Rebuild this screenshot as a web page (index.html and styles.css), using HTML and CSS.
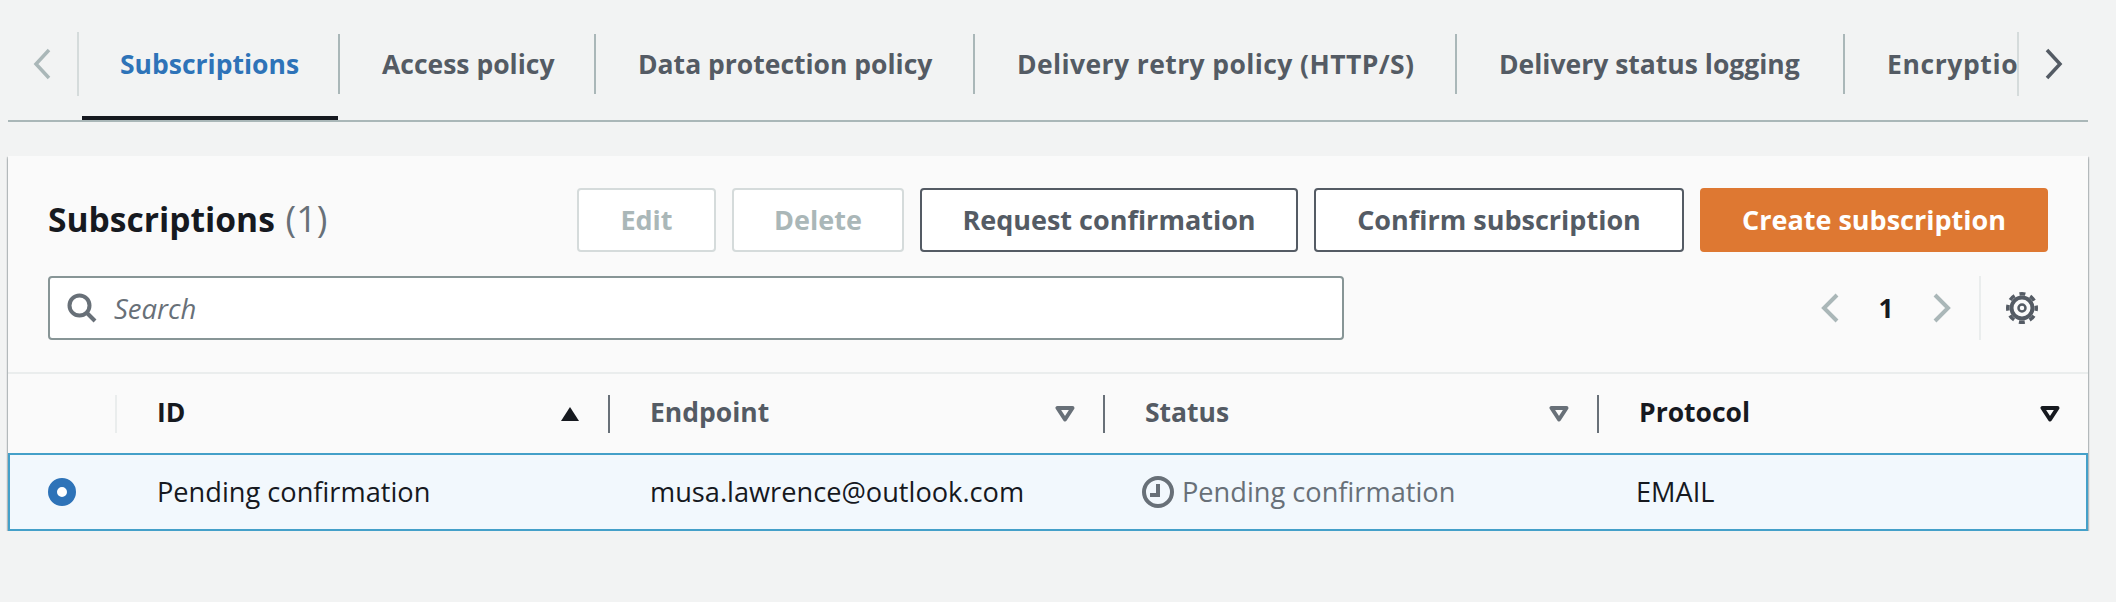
FILE: index.html
```html
<!DOCTYPE html>
<html lang="en">
<head>
  <meta charset="UTF-8" />
  <title>Subscriptions</title>
  <link rel="stylesheet" href="styles.css">
</head>
<body>
  <div class="page">
    <div class="tabs">
      <button class="tab-nav tab-nav-left">
        <svg width="20" height="32" viewBox="0 0 20 32"><polyline points="17,2 4,16 17,30" /></svg>
      </button>
      <div class="tab-list">
        <a class="tab tab-subs active"><span>Subscriptions</span></a>
        <a class="tab tab-access"><span>Access policy</span></a>
        <a class="tab tab-data"><span>Data protection policy</span></a>
        <a class="tab tab-retry"><span>Delivery retry policy (HTTP/S)</span></a>
        <a class="tab tab-logging"><span>Delivery status logging</span></a>
        <a class="tab tab-encryption"><span>Encryption</span></a>
      </div>
      <button class="tab-nav tab-nav-right">
        <svg width="20" height="32" viewBox="0 0 20 32"><polyline points="3,2 16,16 3,30" /></svg>
      </button>
    </div>

    <div class="card">
      <div class="card-head">
        <div class="toolbar">
          <h2>Subscriptions <span class="count">(1)</span></h2>
          <div class="actions">
            <button class="btn btn-edit" disabled>Edit</button>
            <button class="btn btn-delete" disabled>Delete</button>
            <button class="btn btn-request">Request confirmation</button>
            <button class="btn btn-confirm">Confirm subscription</button>
            <button class="btn btn-primary">Create subscription</button>
          </div>
        </div>
        <div class="filter-row">
          <div class="search">
            <svg class="search-icon" width="30" height="30" viewBox="0 0 30 30"><circle cx="12.5" cy="12.5" r="10" /><line x1="19.5" y1="19.5" x2="28" y2="28" /></svg>
            <span>Search</span>
          </div>
          <div class="pager">
            <svg width="20" height="32" viewBox="0 0 20 32"><polyline points="17,3 4,16 17,29" /></svg>
            <span class="page-num">1</span>
            <svg width="20" height="32" viewBox="0 0 20 32"><polyline points="3,3 16,16 3,29" /></svg>
          </div>
          <div class="settings">
            <svg width="32" height="32" viewBox="0 0 32 32">
              <circle class="gear-teeth" cx="16" cy="16" r="14.25" />
              <circle class="gear-ring" cx="16" cy="16" r="10.5" />
              <circle class="gear-hub" cx="16" cy="16" r="3.5" />
            </svg>
          </div>
        </div>
      </div>

      <div class="table-head">
        <div class="head-cell head-select"></div>
        <div class="head-cell head-sorted">
          <span>ID</span>
          <svg width="20" height="16" viewBox="0 0 20 16"><path class="solid" d="M10 1 L19 15 H1 Z" /></svg>
        </div>
        <div class="head-cell">
          <span>Endpoint</span>
          <svg width="20" height="16" viewBox="0 0 20 16"><path d="M2.5 2 H17.5 L10 13.5 Z" /></svg>
        </div>
        <div class="head-cell">
          <span>Status</span>
          <svg width="20" height="16" viewBox="0 0 20 16"><path d="M2.5 2 H17.5 L10 13.5 Z" /></svg>
        </div>
        <div class="head-cell head-dark">
          <span>Protocol</span>
          <svg width="20" height="16" viewBox="0 0 20 16"><path d="M2.5 2 H17.5 L10 13.5 Z" /></svg>
        </div>
      </div>

      <div class="table-row">
        <div class="cell-select"><span class="radio"></span></div>
        <div class="cell">Pending confirmation</div>
        <div class="cell">musa.lawrence@outlook.com</div>
        <div class="cell cell-status">
          <svg width="32" height="32" viewBox="0 0 32 32"><circle cx="16" cy="16" r="14" /><polyline points="16,8 16,19 8,19" /></svg>
          <span>Pending confirmation</span>
        </div>
        <div class="cell cell-protocol">EMAIL</div>
      </div>
    </div>
  </div>
</body>
</html>
```

FILE: styles.css
```css
* {
  box-sizing: border-box;
}
body {
  margin: 0;
  background-color: #f2f3f3;
  font-family: "Open Sans", "Noto Sans", sans-serif;
  font-size: 26.5px;
  color: #16191f;
}
.page {
  padding-right: 28px;
  padding-left: 8px;
}
svg {
  display: block;
  flex: none;
  fill: none;
}
button {
  font-family: inherit;
  font-size: inherit;
}

/* tabs */
.tabs {
  display: flex;
  height: 122px;
  border-bottom: 2px solid #aab7b8;
}
.tab-nav {
  display: flex;
  flex: none;
  align-items: center;
  width: 71px;
  height: 64px;
  margin-top: 32px;
  padding: 0;
  background: none;
  border: none;
}
.tab-nav svg polyline {
  stroke-width: 3.5;
}
.tab-nav-left {
  padding-left: 24px;
  border-right: 2px solid #d5dbdb;
}
.tab-nav-left polyline {
  stroke: #aab7b8;
}
.tab-nav-right {
  padding-left: 25px;
  border-left: 2px solid #d5dbdb;
}
.tab-nav-right polyline {
  stroke: #545b64;
}
.tab-list {
  display: flex;
  flex: 1;
  min-width: 0;
  overflow: hidden;
  padding-left: 3px;
}
.tab {
  flex: none;
  height: 120px;
  padding-top: 34px;
  font-weight: 700;
  color: #545b64;
  white-space: nowrap;
  border-bottom: 4px solid transparent;
}
.tab span {
  display: flex;
  align-items: center;
  height: 60px;
  padding-left: 42px;
  border-right: 2px solid #aab7b8;
}
.tab-subs {
  width: 256px;
  margin-right: 2px;
}
.tab-subs span {
  margin-right: -2px;
}
.tab-access {
  width: 256px;
}
.tab-data {
  width: 379px;
}
.tab-retry {
  width: 482px;
  letter-spacing: 0.4px;
}
.tab-logging {
  width: 388px;
}
.tab-encryption {
  letter-spacing: 0.6px;
}
.tab-encryption span {
  border-right: none;
}
.tab.active {
  color: #2e73b8;
  border-bottom-color: #16191f;
}
.tab.active span {
  padding-left: 38px;
}

/* card */
.card {
  margin-top: 34px;
  background-color: #fafafa;
  box-shadow: 0 2px 2px 0 rgba(0, 28, 36, 0.4), 1px 1px 1px 0 rgba(0, 28, 36, 0.15), -1px 1px 1px 0 rgba(0, 28, 36, 0.15);
}
.card-head {
  padding: 32px 40px;
  border-bottom: 2px solid #eaeded;
}
.toolbar {
  display: flex;
  align-items: center;
  justify-content: space-between;
}
h2 {
  margin: 0;
  padding-bottom: 3px;
  font-size: 33.6px;
  font-weight: 700;
}
.count {
  margin-left: 2px;
  font-size: 36px;
  font-weight: 400;
  color: #687078;
}
.actions {
  display: flex;
  gap: 16px;
}
.btn {
  height: 64px;
  padding: 0 0 2px;
  font-size: 27px;
  font-weight: 700;
  color: #545b64;
  background-color: #fff;
  border: 2px solid #545b64;
  border-radius: 4px;
}
.btn-edit {
  width: 139px;
}
.btn-delete {
  width: 172px;
}
.btn-request {
  width: 378px;
}
.btn-confirm {
  width: 370px;
}
.btn-primary {
  width: 348px;
  color: #fff;
  background-color: #de7832;
  border-color: #de7832;
}
.btn:disabled {
  color: #aab7b8;
  border-color: #d5dbdb;
}
.filter-row {
  display: flex;
  align-items: center;
  height: 64px;
  margin-top: 24px;
}
.search {
  display: flex;
  align-items: center;
  gap: 17px;
  width: 1296px;
  height: 64px;
  padding-left: 17px;
  font-size: 27.5px;
  font-style: italic;
  color: #687078;
  background-color: #fff;
  border: 2px solid #879596;
  border-radius: 4px;
}
.search-icon circle,
.search-icon line {
  stroke: #687078;
  stroke-width: 4;
}
.pager {
  display: flex;
  align-items: center;
  margin-left: auto;
}
.pager polyline {
  stroke: #aab7b8;
  stroke-width: 4;
}
.page-num {
  width: 92px;
  font-weight: 700;
  text-align: center;
}
.settings {
  display: flex;
  align-items: center;
  height: 64px;
  margin-right: 10px;
  margin-left: 27px;
  padding-left: 25px;
  border-left: 2px solid #eaeded;
}
.gear-teeth {
  stroke: #545b64;
  stroke-width: 3.5;
  stroke-dasharray: 6 5.19;
  stroke-dashoffset: 3;
}
.gear-ring {
  stroke: #545b64;
  stroke-width: 4;
}
.gear-hub {
  stroke: #545b64;
  stroke-width: 2.5;
}

/* table */
.table-head,
.table-row {
  display: grid;
  grid-template-columns: 107px 493px 495px 494px 491px;
}
.table-head {
  align-items: center;
  height: 79px;
}
.head-cell {
  display: flex;
  align-items: center;
  justify-content: space-between;
  height: 38px;
  padding-right: 28px;
  padding-left: 40px;
  font-weight: 700;
  color: #545b64;
  border-left: 2px solid #687078;
}
.head-cell span {
  padding-bottom: 4px;
}
.head-select {
  width: 107px;
  padding: 0;
  border-left: none;
}
.head-sorted {
  color: #16191f;
  border-left-color: #eaeded;
}
.head-cell path {
  stroke: #687078;
  stroke-width: 4;
  stroke-linejoin: round;
}
.head-cell path.solid {
  fill: #16191f;
  stroke: none;
}
.head-dark {
  color: #16191f;
}
.head-dark path {
  stroke: #16191f;
}
.table-row {
  align-items: center;
  height: 78px;
  font-size: 27.2px;
  background-color: #f2f8fd;
  border: 2px solid #44a0c9;
}
.cell-select {
  padding-left: 38px;
}
.radio {
  display: block;
  width: 28px;
  height: 28px;
  background-color: #fff;
  border: 9px solid #2e73b8;
  border-radius: 50%;
}
.cell {
  padding-bottom: 1px;
  padding-left: 40px;
  white-space: nowrap;
}
.cell-status {
  display: flex;
  align-items: center;
  gap: 8px;
  padding-bottom: 0;
  padding-left: 37px;
  color: #687078;
}
.cell-status span {
  padding-bottom: 1px;
}
.cell-status circle,
.cell-status polyline {
  stroke: #687078;
  stroke-width: 4;
}
.cell-protocol {
  padding-left: 37px;
}
```
